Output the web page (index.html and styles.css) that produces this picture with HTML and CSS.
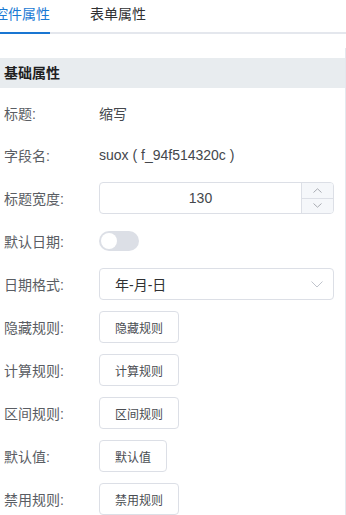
FILE: index.html
```html
<!DOCTYPE html>
<html lang="zh-CN">
<head>
    <meta charset="UTF-8">
    <meta name="viewport" content="width=device-width, initial-scale=1.0">
    <title>控件属性</title>
    <link rel="stylesheet" href="styles.css">
</head>
<body>
    <div class="tabs">
        <div class="tab-nav">
            <div class="tab active">控件属性</div>
            <div class="tab">表单属性</div>
        </div>
    </div>

    <div class="panel">
        <div class="group-title">基础属性</div>
        <div class="form">
            <div class="form-item">
                <label>标题:</label>
                <div class="value">缩写</div>
            </div>
            <div class="form-item">
                <label>字段名:</label>
                <div class="value">suox ( f_94f514320c )</div>
            </div>
            <div class="form-item">
                <label>标题宽度:</label>
                <div class="num-input">
                    <div class="num-value">130</div>
                    <div class="stepper">
                        <span class="step">
                            <svg width="9" height="5" viewBox="0 0 9 5"><path d="M0.5 4.5 L4.5 0.8 L8.5 4.5" fill="none" stroke="#a8abb2" stroke-width="1"/></svg>
                        </span>
                        <span class="step down">
                            <svg width="9" height="5" viewBox="0 0 9 5"><path d="M0.5 0.5 L4.5 4.2 L8.5 0.5" fill="none" stroke="#a8abb2" stroke-width="1"/></svg>
                        </span>
                    </div>
                </div>
            </div>
            <div class="form-item">
                <label>默认日期:</label>
                <div class="switch"><span class="knob"></span></div>
            </div>
            <div class="form-item">
                <label>日期格式:</label>
                <div class="select">
                    <span>年-月-日</span>
                    <svg width="12" height="7" viewBox="0 0 12 7"><path d="M0.5 0.5 L6 6 L11.5 0.5" fill="none" stroke="#c0c4cc" stroke-width="1"/></svg>
                </div>
            </div>
            <div class="form-item">
                <label>隐藏规则:</label>
                <button class="btn">隐藏规则</button>
            </div>
            <div class="form-item">
                <label>计算规则:</label>
                <button class="btn">计算规则</button>
            </div>
            <div class="form-item">
                <label>区间规则:</label>
                <button class="btn">区间规则</button>
            </div>
            <div class="form-item">
                <label>默认值:</label>
                <button class="btn">默认值</button>
            </div>
            <div class="form-item">
                <label>禁用规则:</label>
                <button class="btn">禁用规则</button>
            </div>
        </div>
    </div>
</body>
</html>
```

FILE: styles.css
```css
body {
    margin: 0;
    font-family: "Liberation Sans", "Noto Sans CJK SC", sans-serif;
    font-size: 14px;
    color: #5a5d63;
    background: #fff;
    overflow: hidden;
}
.tabs {
    border-bottom: 2px solid #e4e7ed;
}
.tab-nav {
    display: flex;
    margin-left: -6px;
    margin-bottom: -2px;
}
.tab {
    line-height: 29px;
    padding-bottom: 3px;
    border-bottom: 2px solid transparent;
    margin-right: 40px;
    color: #303133;
}
.tab.active {
    color: #1a7ad4;
    border-bottom-color: #1976d2;
}
.panel {
    margin-top: 14px;
    width: 346px;
    box-sizing: border-box;
    border-right: 1px solid #e4e7ed;
    padding-top: 10px;
    min-height: 460px;
}
.group-title {
    height: 30px;
    line-height: 30px;
    background: #e8ecef;
    padding-left: 4px;
    font-weight: bold;
    color: #1f1f1f;
}
.form {
    padding: 10px 0 0 4px;
}
.form-item {
    display: flex;
    align-items: center;
    min-height: 32px;
    margin-bottom: 11px;
}
.form-item:first-child {
    min-height: 30px;
}
.form-item label {
    width: 95px;
    flex-shrink: 0;
}
.value {
    color: #44474c;
}
.num-input {
    display: flex;
    width: 235px;
    height: 32px;
    box-sizing: border-box;
    border: 1px solid #dcdfe6;
    border-radius: 4px;
    overflow: hidden;
}
.num-value {
    flex: 1;
    text-align: center;
    line-height: 30px;
    color: #44474c;
}
.stepper {
    width: 31px;
    display: flex;
    flex-direction: column;
    border-left: 1px solid #dcdfe6;
    background: #f5f7fa;
}
.step {
    flex: 1;
    display: flex;
    align-items: center;
    justify-content: center;
}
.step.down {
    border-top: 1px solid #dcdfe6;
}
.switch {
    width: 40px;
    height: 20px;
    border-radius: 10px;
    background: #dcdfe6;
    display: flex;
    align-items: center;
    padding-left: 2px;
    box-sizing: border-box;
}
.knob {
    width: 16px;
    height: 16px;
    border-radius: 50%;
    background: #fff;
}
.select {
    display: flex;
    align-items: center;
    justify-content: space-between;
    width: 235px;
    height: 32px;
    box-sizing: border-box;
    border: 1px solid #dcdfe6;
    border-radius: 4px;
    padding: 0 10px 0 15px;
    color: #303133;
}
.btn {
    height: 32px;
    padding: 0 15px;
    font-family: inherit;
    font-size: 12px;
    color: #4a4d52;
    background: #fff;
    border: 1px solid #dcdfe6;
    border-radius: 4px;
}
```
